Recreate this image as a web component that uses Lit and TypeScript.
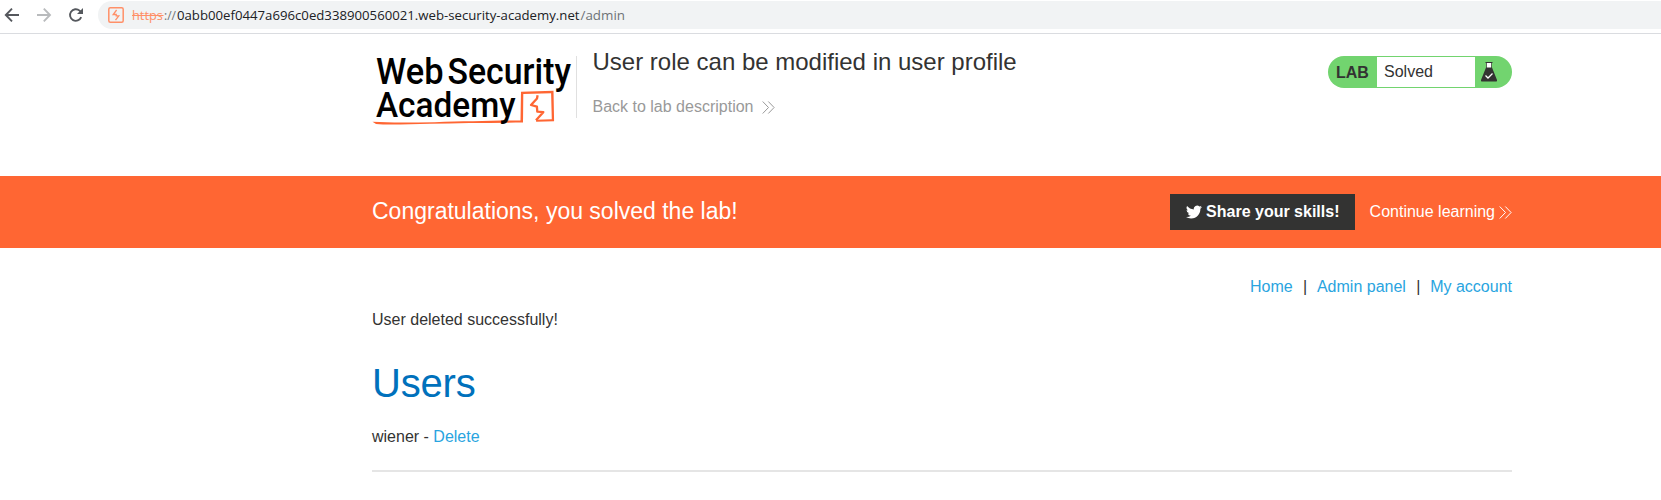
import { LitElement, html, css } from "lit";
import { customElement, property } from "lit/decorators.js";

const chevrons = html`<svg class="chev" width="13" height="13" viewBox="0 0 13 13" fill="none" stroke="currentColor" stroke-width="1"><path d="M.7.5 6.500 6.500.7 12.500M6.300.5 12.100 6.500 6.300 12.500"/></svg>`;

@customElement("browser-bar")
class BrowserBar extends LitElement {
  static styles = css`
    :host { display: flex; height: 34px; box-sizing: border-box; border-bottom: 1px solid #dadce0; background: #fff; padding-top: 1px; }
    .nav { display: flex; width: 98px; height: 28px; flex: none; }
    .nav svg { width: 98px; height: 28px; }
    .field { flex: 1; display: flex; align-items: center; height: 28px; border-radius: 14px 0 0 14px; background: #f1f3f4; padding-left: 10px; }
    .burp { flex: none; margin-right: 8px; }
    .url text { font-family: "Open Sans", "Noto Sans", sans-serif; font-size: 13.5px; }
    .scheme { fill: #ff8f66; }
    .host { fill: #202124; }
    .path { fill: #6f7377; }
  `;
  render() {
    return html`
      <div class="nav">
        <svg viewBox="0 1 98 28" fill="none" stroke-width="1.900">
          <path stroke="#55585d" d="M19 15H6M12 8.700 5.800 15l6.200 6.300"/>
          <path stroke="#b9bbbd" d="M37 15h13M43.800 8.700 50 15l-6.200 6.300"/>
          <path stroke="#55585d" d="M81.200 17.200A5.800 5.800 0 1 1 79.600 10.600L81.300 12.400"/>
          <path fill="#55585d" d="M83 8v6h-6z"/>
        </svg>
      </div>
      <div class="field">
        <svg class="burp" width="16" height="16" viewBox="0 0 16 16" fill="none" stroke="#ff9068">
          <rect x=".8" y=".8" width="14.400" height="14.400" rx="1.500" stroke-width="1.500"/>
          <path stroke-width="1.300" d="M8.600 3 5.200 7.500h3v1.300h2.600L7.500 13.200"/>
        </svg>
        <svg class="url" width="500" height="28">
          <text class="scheme" x="0" y="18.700" textLength="31" lengthAdjust="spacingAndGlyphs">https</text>
          <path d="M0 14.500h31.500" stroke="#ff8f66"/>
          <text class="path" x="32" y="18.700" textLength="12" lengthAdjust="spacingAndGlyphs">://</text>
          <text class="host" x="45" y="18.700" textLength="402.500" lengthAdjust="spacingAndGlyphs">0abb00ef0447a696c0ed338900560021.web-security-academy.net</text>
          <text class="path" x="448.500" y="18.700" textLength="44.500" lengthAdjust="spacingAndGlyphs">/admin</text>
        </svg>
      </div>`;
  }
}

@customElement("academy-logo")
class AcademyLogo extends LitElement {
  static styles = css`
    :host { display: block; width: 204px; height: 76px; }
    svg { display: block; overflow: visible; }
    text { font-family: Roboto, sans-serif; font-weight: 500; fill: #000; }
    .l1 { font-size: 37.400px; }
    .l2 { font-size: 35.400px; }
  `;
  render() {
    return html`<svg width="204" height="76" viewBox="372 52 204 76">
      <path fill="#ff6633" d="M372.500 121.800c18 1.100 40 .7 62 .4 31-.8 56-1.500 86-1.700l.5-28.700 32.500-1 .6 30.500-18 .4v-2l15.700-.5-.7-26-27.800.8-.3 28.600C490 123 460 123 430 123.800c-20 .5-42 1.400-54 .3z"/>
      <path fill="none" stroke="#ff6633" stroke-width="2.300" stroke-linejoin="round" d="M537.600 95.300 537 98.500 531 105l5.900 1.600.4 5 6 .6-7.300 8"/>
      <text class="l1" x="376" y="84.300" textLength="67.500" lengthAdjust="spacingAndGlyphs">Web</text>
      <text class="l1" x="447.500" y="84.300" textLength="123.500" lengthAdjust="spacingAndGlyphs">Security</text>
      <text class="l2" x="376" y="116.700" textLength="139.500" lengthAdjust="spacingAndGlyphs">Academy</text>
    </svg>`;
  }
}

@customElement("lab-badge")
class LabBadge extends LitElement {
  @property() status = "Solved";
  static styles = css`
    :host { display: grid; grid-template-columns: 48px 98px 1fr; width: 184px; height: 32px; box-sizing: border-box; padding: 1px; background: #72d46f; border-radius: 16px; font: 16px/30px "Liberation Sans", Arial, sans-serif; color: #333332; }
    .lab { font-weight: bold; padding-left: 7px; line-height: 31px; }
    .state { background: #fff; padding-left: 7px; height: 30px; line-height: 29px; }
    .flask { padding: 4px 0 0 5px; }
    svg { display: block; }
  `;
  render() {
    return html`<div class="lab">LAB</div><div class="state">${this.status}</div>
      <div class="flask"><svg width="18" height="22" viewBox="0 0 18 22">
        <path fill="#fff" d="M6.500 2h5v5h-5z"/>
        <path fill="#333332" d="M5.500 1h7v1h-7zM6.300 2h.7v5h-.7zm4.700 0h.7v5H11zM6 6.500h6l5 12.500q.5 1.500-1 1.500H2q-1.500 0-1-1.500z"/>
        <path fill="none" stroke="#fff" stroke-width="1.300" d="m5.500 14.500 2.500 2.500 4.500-4.500"/>
      </svg></div>`;
  }
}

@customElement("app-root")
class AppRoot extends LitElement {
  static styles = css`
    :host { display: block; height: 500px; overflow: hidden; background: #fff; font: 16px/20px "Liberation Sans", Arial, sans-serif; color: #333332; }
    .wrap { width: 1140px; margin-left: 372px; }
    .head { display: flex; height: 142px; box-sizing: border-box; padding-top: 18px; }
    .info { margin: 4px 0 0; height: 62px; border-left: 1px solid #e0e0e0; padding-left: 15.500px; flex: 1; }
    h2 { font-size: 24px; line-height: 28px; font-weight: normal; margin: -8px 0 0; white-space: nowrap; }
    .back { display: flex; align-items: center; gap: 8.500px; margin-top: 21px; color: #999; }
    lab-badge { margin-top: 4px; }
    .banner { background: #ff6633; color: #fff; height: 72px; }
    .banner .wrap { display: flex; align-items: center; height: 72px; }
    .congrats { flex: 1; font-size: 23px; line-height: 28px; margin-top: -3px; }
    .share { display: flex; align-items: center; box-sizing: border-box; width: 185px; height: 36px; background: #333332; font-weight: bold; padding-left: 16px; gap: 4.500px; }
    .continue { display: flex; align-items: center; gap: 4px; margin-left: 15px; }
    .links { display: flex; justify-content: flex-end; padding-top: 29px; }
    .sep { width: 4px; margin: 0 10px 0 10.300px; }
    a { color: #29a4e0; }
    .msg { margin: 13px 0 0; }
    h1 { font-size: 40px; line-height: 46px; font-weight: normal; color: #0071bc; margin: 30px 0 0; letter-spacing: -.2px; }
    .user { margin: 21px 0 0; }
    .rule { height: 2px; background: #e5e5e5; margin-top: 23px; }
  `;
  render() {
    return html`
      <browser-bar></browser-bar>
      <header class="wrap head">
        <academy-logo></academy-logo>
        <div class="info">
          <h2>User role can be modified in user profile</h2>
          <div class="back"><span>Back to lab description</span>${chevrons}</div>
        </div>
        <lab-badge status="Solved"></lab-badge>
      </header>
      <section class="banner"><div class="wrap">
        <div class="congrats">Congratulations, you solved the lab!</div>
        <div class="share">
          <svg width="16" height="16" viewBox="0 0 24 24" fill="#fff"><path d="M23.950 4.570a10 10 0 0 1-2.820.770 4.960 4.960 0 0 0 2.160-2.720c-.950.550-2 .950-3.130 1.180a4.920 4.920 0 0 0-8.380 4.480C7.690 8.090 4.070 6.130 1.640 3.160a4.920 4.920 0 0 0 1.520 6.570 4.900 4.900 0 0 1-2.230-.610v.060a4.920 4.920 0 0 0 3.950 4.830 5 5 0 0 1-2.210.080 4.940 4.940 0 0 0 4.600 3.420A9.870 9.870 0 0 1 0 19.540a13.990 13.990 0 0 0 7.550 2.210c9.050 0 14-7.500 14-13.980 0-.210 0-.420-.020-.630a9.940 9.940 0 0 0 2.420-2.570z"/></svg>
          <span>Share your skills!</span>
        </div>
        <div class="continue"><span>Continue learning</span>${chevrons}</div>
      </div></section>
      <main class="wrap">
        <nav class="links"><a>Home</a><span class="sep">|</span><a>Admin panel</a><span class="sep">|</span><a>My account</a></nav>
        <p class="msg">User deleted successfully!</p>
        <h1>Users</h1>
        <p class="user">wiener - <a>Delete</a></p>
        <div class="rule"></div>
      </main>`;
  }
}
